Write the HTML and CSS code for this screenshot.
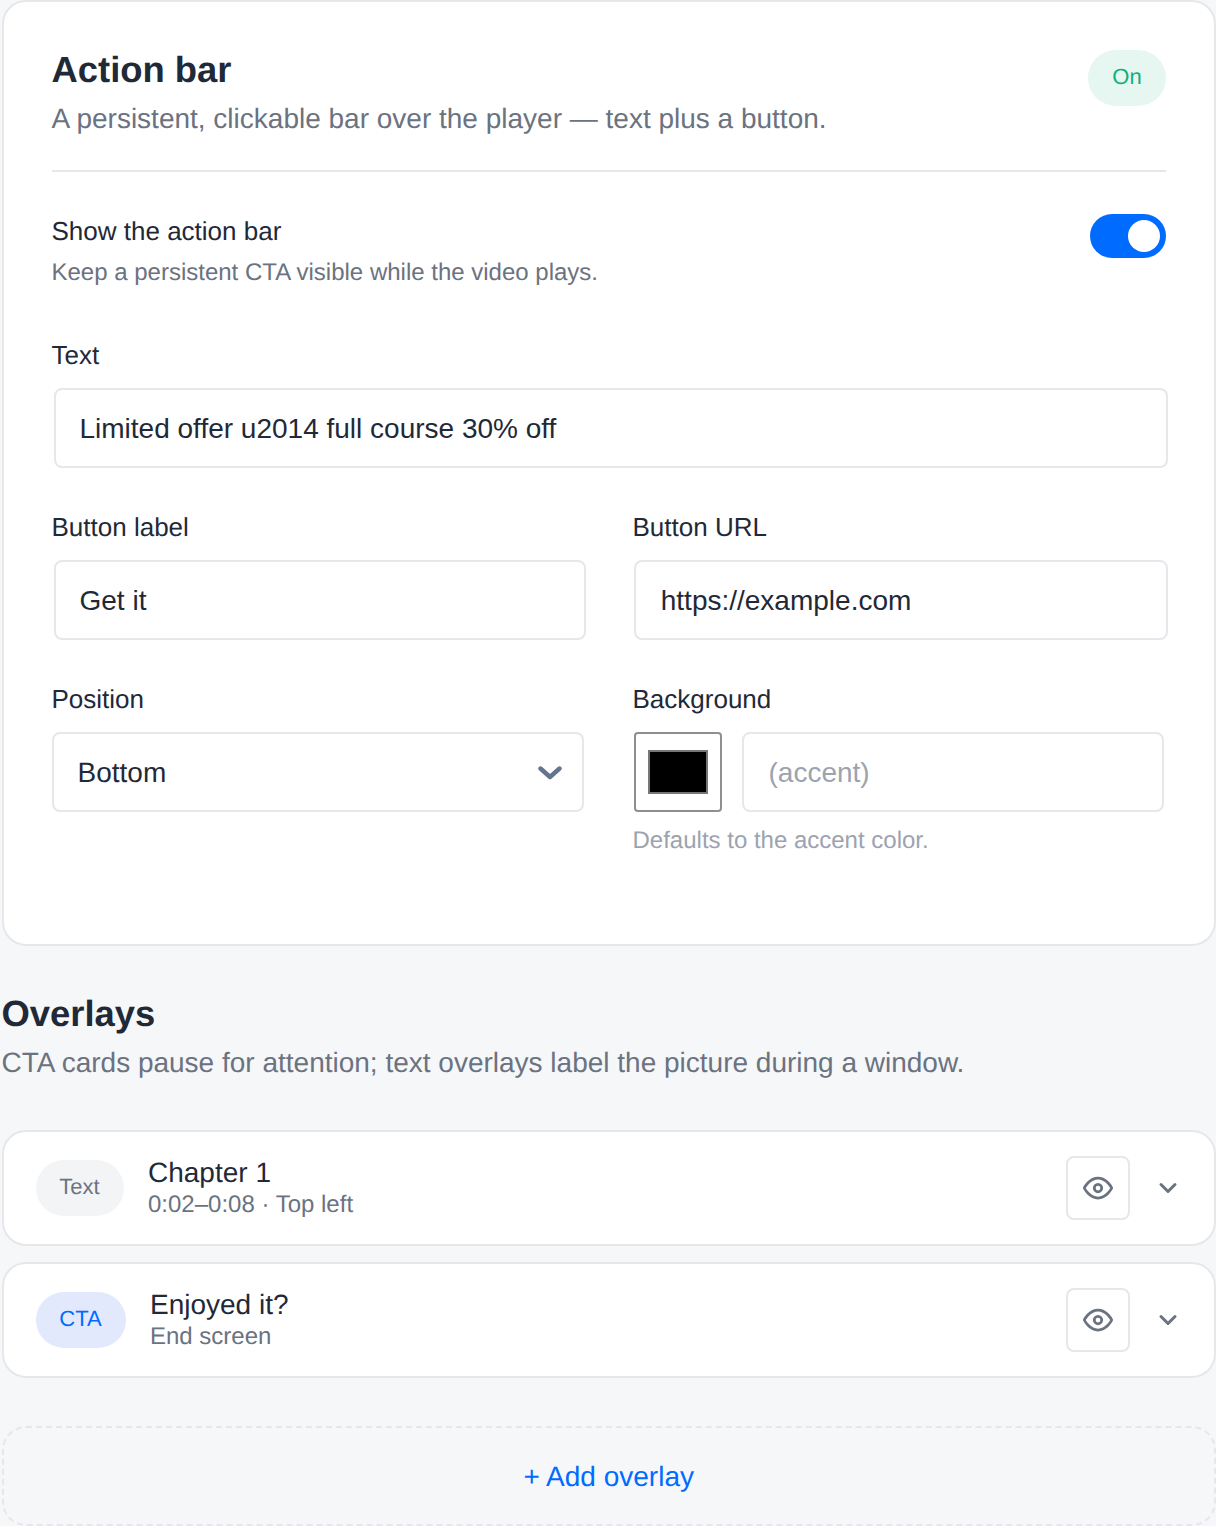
FILE: index.html
```html
<!DOCTYPE html>
<html lang="en-US">

<head>
	<title>Action bar</title>
	<meta charset="utf-8">
	<meta name="viewport" content="width=device-width, initial-scale=1.0">
	<link rel="stylesheet" href="styles.css">
</head>

<body>
	<section class="card">
		<div class="card-head">
			<div>
				<h2>Action bar</h2>
				<p class="sub">A persistent, clickable bar over the player — text plus a button.</p>
			</div>
			<span class="badge">On</span>
		</div>

		<div class="toggle-row">
			<div>
				<div class="toggle-label">Show the action bar</div>
				<div class="toggle-hint">Keep a persistent CTA visible while the video plays.</div>
			</div>
			<div class="toggle"><span class="knob"></span></div>
		</div>

		<div class="field">
			<label>Text</label>
			<input class="input" type="text" value="Limited offer u2014 full course 30% off">
		</div>

		<div class="grid">
			<div class="field">
				<label>Button label</label>
				<input class="input" type="text" value="Get it">
			</div>
			<div class="field">
				<label>Button URL</label>
				<input class="input" type="text" value="https://example.com">
			</div>
			<div class="field">
				<label>Position</label>
				<div class="select">
					<span>Bottom</span>
					<svg class="select-arrow" viewBox="0 0 24 14" width="24" height="14" fill="none" stroke="#64748b" stroke-width="4.4" stroke-linecap="round" stroke-linejoin="round"><polyline points="2.5,2.5 12,11 21.5,2.5"></polyline></svg>
				</div>
			</div>
			<div class="field">
				<label>Background</label>
				<div class="color-row">
					<input class="color" type="color" value="#000000">
					<input class="input accent" type="text" placeholder="(accent)">
				</div>
				<div class="field-hint">Defaults to the accent color.</div>
			</div>
		</div>
	</section>

	<div class="overlays-head">
		<h2>Overlays</h2>
		<p class="sub">CTA cards pause for attention; text overlays label the picture during a window.</p>
	</div>

	<div class="overlay">
		<span class="pill">Text</span>
		<div class="overlay-info">
			<div class="overlay-title">Chapter 1</div>
			<div class="overlay-meta">0:02–0:08 · Top left</div>
		</div>
		<button class="eye">
			<svg viewBox="0 0 24 24" width="30" height="30" fill="none" stroke="#6b7280" stroke-width="2.2" stroke-linecap="round" stroke-linejoin="round"><path d="M1 12s4-8 11-8 11 8 11 8-4 8-11 8-11-8-11-8z"></path><circle cx="12" cy="12" r="3"></circle></svg>
		</button>
		<svg class="chevron" viewBox="0 0 24 24" width="28" height="28" fill="none" stroke="#6b7280" stroke-width="2.6" stroke-linecap="round" stroke-linejoin="round"><polyline points="6 9 12 15 18 9"></polyline></svg>
	</div>

	<div class="overlay">
		<span class="pill pill-cta">CTA</span>
		<div class="overlay-info">
			<div class="overlay-title">Enjoyed it?</div>
			<div class="overlay-meta">End screen</div>
		</div>
		<button class="eye">
			<svg viewBox="0 0 24 24" width="30" height="30" fill="none" stroke="#6b7280" stroke-width="2.2" stroke-linecap="round" stroke-linejoin="round"><path d="M1 12s4-8 11-8 11 8 11 8-4 8-11 8-11-8-11-8z"></path><circle cx="12" cy="12" r="3"></circle></svg>
		</button>
		<svg class="chevron" viewBox="0 0 24 24" width="28" height="28" fill="none" stroke="#6b7280" stroke-width="2.6" stroke-linecap="round" stroke-linejoin="round"><polyline points="6 9 12 15 18 9"></polyline></svg>
	</div>

	<div class="add-overlay">+ Add overlay</div>
</body>
</html>
```

FILE: styles.css
```css
html, body {
	padding: 0;
	margin: 0;
	background: #f6f7f9;
	color: #1f2937;
	font-family: "Liberation Sans", Arial, sans-serif;
	text-rendering: geometricPrecision;
}

*, *:before, *:after {
	box-sizing: border-box;
}

body {
	padding: 0 0 0 1.5px;
	width: 1216px;
	height: 1526px;
	overflow: hidden;
}

h2 {
	margin: 0;
	font-size: 36.4px;
	line-height: 40px;
	font-weight: 700;
	color: #1f2937;
}

.sub {
	margin: 8px 0 0 0;
	font-size: 28px;
	line-height: 42px;
	color: #6b7280;
}

.card {
	height: 946px;
	padding: 48px;
	background: #fff;
	border: 2px solid #e5e7eb;
	border-radius: 24px;
}

.card-head {
	display: flex;
	justify-content: space-between;
	align-items: flex-start;
	height: 122px;
	border-bottom: 2px solid #e5e7eb;
}

.badge {
	display: flex;
	align-items: center;
	justify-content: center;
	width: 78px;
	height: 56px;
	padding-bottom: 2px;
	border-radius: 28px;
	background: #e6f6f0;
	color: #0fb07a;
	font-size: 22px;
}

.toggle-row {
	display: flex;
	justify-content: space-between;
	align-items: flex-start;
	margin-top: 41px;
}

.toggle-label {
	font-size: 26px;
	line-height: 36px;
}

.toggle-hint {
	margin-top: 6px;
	font-size: 24px;
	line-height: 36px;
	color: #6b7280;
}

.toggle {
	display: flex;
	justify-content: flex-end;
	align-items: center;
	width: 76px;
	height: 44px;
	margin-top: 1px;
	padding: 6px;
	border-radius: 22px;
	background: #006bff;
}

.knob {
	width: 32px;
	height: 32px;
	border-radius: 50%;
	background: #fff;
}

.field label {
	display: block;
	margin-bottom: 15px;
	font-size: 26px;
	line-height: 36px;
}

.toggle-row + .field {
	margin-top: 46px;
}

.input, .select {
	display: flex;
	align-items: center;
	height: 80px;
	padding: 2px 24px 0 24px;
	background: #fff;
	border: 2px solid #e5e7eb;
	border-radius: 8px;
	color: #1f2937;
	font-family: inherit;
	font-size: 28px;
	outline: none;
}

.input {
	width: 100%;
	margin-left: 2px;
}

.input::placeholder {
	color: #9ca3af;
}

.select {
	position: relative;
}

.select-arrow {
	position: absolute;
	right: 20px;
	top: 32px;
}

.grid {
	display: grid;
	grid-template-columns: 532px 533px;
	column-gap: 49px;
	row-gap: 41px;
	margin-top: 41px;
}

.grid .field:nth-child(2) .input {
	width: 533.75px;
	margin-left: 1.75px;
	padding-left: 24.5px;
}

.color-row {
	display: flex;
	gap: 20px;
}

.color {
	flex: none;
	width: 88px;
	height: 80px;
	margin: 0 0 0 1px;
	padding: 0;
	background: #fff;
	border: 2px solid #8f8f8f;
	border-radius: 4px;
	-webkit-appearance: none;
	appearance: none;
}

.color::-webkit-color-swatch-wrapper {
	padding: 16px 12px;
}

.color::-webkit-color-swatch {
	border: 2px solid #777;
	border-radius: 0;
}

.input.accent {
	flex: none;
	width: 422px;
	margin-left: 0;
	padding-left: 25px;
}

.field-hint {
	margin-top: 11px;
	font-size: 24px;
	line-height: 36px;
	color: #9ca3af;
}

.overlays-head {
	margin-top: 48px;
}

.overlay {
	display: flex;
	align-items: center;
	gap: 24px;
	height: 116px;
	margin-bottom: 16px;
	padding: 0 32px 0 32px;
	background: #fff;
	border: 2px solid #e5e7eb;
	border-radius: 24px;
}

.overlays-head + .overlay {
	margin-top: 46px;
}

.pill {
	flex: none;
	display: flex;
	align-items: center;
	justify-content: center;
	width: 88px;
	height: 56px;
	padding-bottom: 2px;
	border-radius: 28px;
	background: #f3f4f6;
	color: #6b7280;
	font-size: 22px;
}

.pill-cta {
	width: 90px;
	background: #e3e9fd;
	color: #006bff;
}

.overlay-info {
	flex: 1;
	padding-left: 0.5px;
}

.overlay-title {
	padding-top: 1px;
	font-size: 28px;
	line-height: 32px;
}

.overlay-meta {
	font-size: 24px;
	line-height: 31px;
	color: #6b7280;
}

.eye {
	flex: none;
	display: flex;
	align-items: center;
	justify-content: center;
	width: 64px;
	height: 64px;
	padding: 0;
	background: #fff;
	border: 2px solid #e5e7eb;
	border-radius: 8px;
}

.chevron {
	flex: none;
}

.add-overlay {
	display: flex;
	align-items: center;
	justify-content: center;
	height: 100px;
	margin-top: 48px;
	padding-top: 1px;
	border: 2px dashed #e5e7eb;
	border-radius: 24px;
	color: #006bff;
	font-size: 28px;
}
```
